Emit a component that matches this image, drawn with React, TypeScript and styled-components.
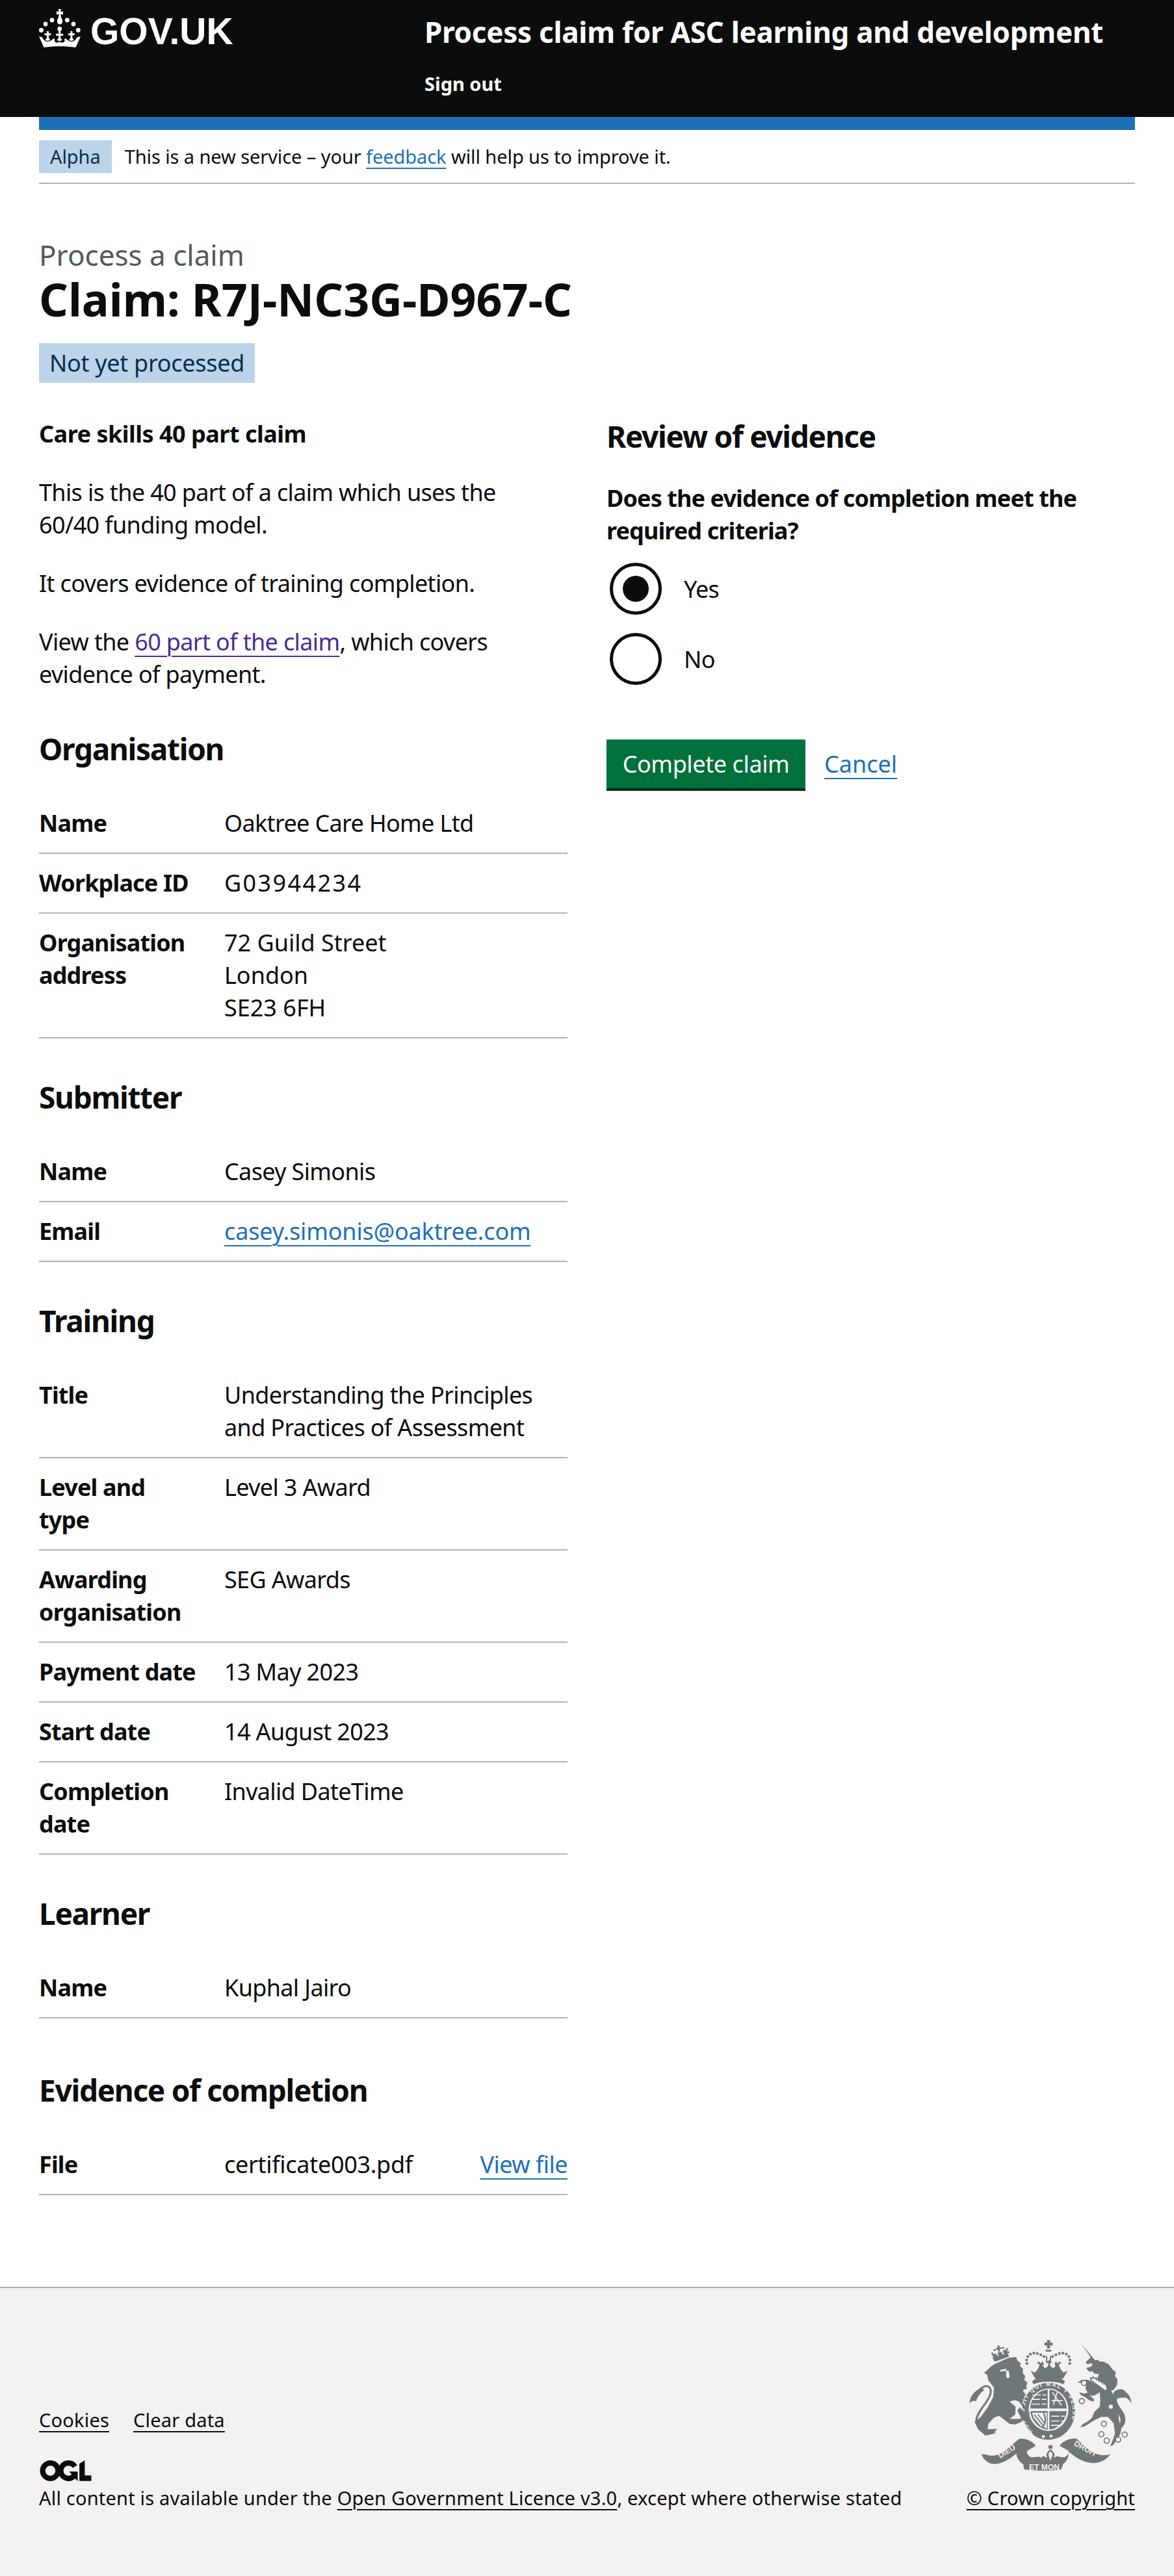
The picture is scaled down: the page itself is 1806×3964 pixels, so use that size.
import type { ReactNode } from "react";
import styled, { createGlobalStyle } from "styled-components";

const FONT = `"Noto Sans", Arial, sans-serif`;
const BLACK = "#0b0c0c";
const RULE = "#b1b4b6";
const ARMS = "#6f777b";
const FOOTER_BG = "#f3f2f1";

const GlobalStyle = createGlobalStyle`
  html, body { margin: 0; padding: 0; background: #fff; }
  body { font-family: ${FONT}; color: ${BLACK}; }
  * { box-sizing: border-box; }
`;

const Header = styled.header`
  background: ${BLACK};
  height: 180px;
  padding: 14px 60px 0;
  display: flex;
`;
const Logo = styled.div`
  width: 593px;
  display: flex;
  align-items: flex-start;
  gap: 15px;
  color: #fff;
  font: 700 57px/59px "Liberation Sans", Arial, sans-serif;
`;
const LogoText = styled.span`
  padding-top: 5px;
`;
const HeaderText = styled.div`
  padding-top: 10px;
`;
const ServiceName = styled.div`
  color: #fff;
  font-size: 44px;
  font-weight: 700;
  line-height: 50px;
  letter-spacing: -0.28px;
`;
const SignOut = styled.div`
  color: #fff;
  font-size: 29px;
  font-weight: 700;
  line-height: 34px;
  margin-top: 38px;
`;

const Width = styled.div`
  margin: 0 60px;
`;
const BlueBar = styled.div`
  height: 20px;
  background: #1d70b8;
`;
const Phase = styled.div`
  display: flex;
  align-items: flex-start;
  gap: 20px;
  height: 83px;
  padding-top: 16px;
  border-bottom: 2px solid ${RULE};
  font-size: 29px;
  line-height: 50px;
  letter-spacing: -0.08px;
`;
const Tag = styled.span`
  background: #bbd4ea;
  color: #0c2d4a;
  padding: 0 17px;
  height: 50px;
  line-height: 50px;
  font-size: 29px;
`;
const A = styled.a<{ $color?: string; $spacing?: number }>`
  color: ${(p) => p.$color || "#1d70b8"};
  text-decoration: underline;
  text-decoration-thickness: 2px;
  text-underline-offset: 0.22em;
  ${(p) => (p.$spacing !== undefined ? `letter-spacing: ${p.$spacing}px;` : "")}
`;

const Main = styled.main`
  padding: 84px 0 141px;
`;
const Caption = styled.div`
  color: #505a5f;
  font-size: 44px;
  line-height: 50px;
`;
const Title = styled.h1`
  margin: 0 0 25px;
  font-size: 70px;
  line-height: 86px;
  font-weight: 700;
`;
const StatusTag = styled.div`
  background: #bbd4ea;
  color: #0c2d4a;
  width: 332px;
  height: 61px;
  padding: 0 16px;
  font-size: 36px;
  line-height: 61px;
  letter-spacing: -0.3px;
  white-space: nowrap;
`;
const Columns = styled.div`
  display: grid;
  grid-template-columns: 813px 813px;
  gap: 60px;
  margin-top: 52px;
`;
const Column = styled.div``;
const Intro = styled.div`
  padding: 2px 0 19px;
`;
const P = styled.p<{ $bold?: boolean }>`
  margin: 0 0 40px;
  font-size: 36px;
  line-height: 50px;
  font-weight: ${(p) => (p.$bold ? 700 : 400)};
  letter-spacing: ${(p) => (p.$bold ? "-0.5px" : "-0.65px")};
`;
const H2 = styled.h2`
  margin: 0 0 40px;
  font-size: 46px;
  line-height: 60px;
  font-weight: 700;
  letter-spacing: -1.3px;
`;
const Section = styled.section<{ $after?: number }>`
  margin-bottom: ${(p) => p.$after ?? 60}px;
`;
const Row = styled.div`
  display: flex;
  align-items: flex-start;
  border-bottom: 2px solid ${RULE};
  padding: 20px 0;
  font-size: 36px;
  line-height: 50px;
  letter-spacing: -0.65px;
`;
const Key = styled.div`
  font-weight: 700;
  width: 285px;
  flex: none;
  padding-right: 40px;
  letter-spacing: -0.85px;
`;
const Value = styled.div<{ $spacing?: number }>`
  flex: 1;
  ${(p) => (p.$spacing !== undefined ? `letter-spacing: ${p.$spacing}px;` : "")}
`;
const Legend = styled.div`
  font-size: 36px;
  line-height: 50px;
  font-weight: 700;
  letter-spacing: -0.9px;
  margin: 41px 0 10px;
`;
const Radio = styled.div`
  display: flex;
  align-items: center;
  gap: 34px;
  font-size: 36px;
  height: 108px;
  margin-left: 5px;
  letter-spacing: -0.65px;
`;
const Circle = styled.span<{ $on?: boolean }>`
  width: 80px;
  height: 80px;
  border: 5px solid ${BLACK};
  border-radius: 50%;
  display: grid;
  place-items: center;
  &::after {
    content: "";
    width: 40px;
    height: 40px;
    border-radius: 50%;
    background: ${(p) => (p.$on ? BLACK : "transparent")};
  }
`;
const Actions = styled.div`
  display: flex;
  align-items: flex-start;
  gap: 29px;
  margin-top: 70px;
  font-size: 36px;
  line-height: 75px;
`;
const Button = styled.button`
  background: #00703c;
  color: #fff;
  border: 0;
  box-shadow: 0 4px 0 #002d18;
  font: 400 36px/50px ${FONT};
  letter-spacing: -0.4px;
  padding: 0;
  width: 306px;
  height: 75px;
`;

const Footer = styled.footer`
  background: ${FOOTER_BG};
  border-top: 2px solid ${RULE};
  height: 446px;
  padding: 0 60px 101px;
  display: flex;
  justify-content: space-between;
  align-items: flex-end;
  font-size: 29px;
  line-height: 40px;
  letter-spacing: 0.2px;
`;
const FooterLinks = styled.div`
  display: flex;
  gap: 37px;
  margin-bottom: 42px;
`;
const Ogl = styled.svg`
  display: block;
  width: 82px;
  height: 32px;
  margin-bottom: 6px;
`;
const FooterRight = styled.div`
  display: flex;
  flex-direction: column;
  align-items: center;
  gap: 20px;
`;
const Arms = styled.svg`
  display: block;
  width: 250px;
  height: 203px;
`;

function Crown() {
  return (
    <svg width="64" height="59" viewBox="0 0 64 59" fill="#fff" aria-hidden="true">
      <path d="M29.6 0h4.2l-.5 4 3.7-.6v5l-3.7-.6.7 4.6c2 3.2 2.4 6 1.9 8-.5 2-1.9 3-3.9 3s-3.4-1-3.9-3c-.5-2 0-4.8 1.9-8l.7-4.6-3.7.6v-5l3.7.6z" />
      <circle cx="10" cy="23" r="3.4" />
      <circle cx="20" cy="17" r="3.4" />
      <circle cx="3.4" cy="32.5" r="3.4" />
      <circle cx="43.4" cy="17" r="3.4" />
      <circle cx="53" cy="23" r="3.4" />
      <circle cx="60.3" cy="32.5" r="3.4" />
      <circle cx="31.7" cy="30.5" r="3.4" />
      <path d="M0 42l5 1.5c2 3.5 4 6 7.5 6.500 3 .3 6.500-1.500 10-5l2 1.500c-1 1.800-1 3.500 1 4.500 2.500 1 4.700.5 6.200-1 1.500 1.500 3.700 2 6.200 1 2-1 2-2.700 1-4.500l2-1.500c3.500 3.500 7 5.300 10 5 3.500-.5 5.500-3 7.500-6.500L64 42l-7.500 17C41 56.500 23 56.500 7.500 59z" />
      <path d="M12 34h3v3.200h3.400v3h-3.400v4l2.400 3.300-3.900 1.500-3.900-1.500 2.400-3.300v-4H8.600v-3H12z" />
      <path d="M30.200 34h3v4h4v3h-4v3.500l2.600 3.300-4.100 1.500-4.100-1.500 2.600-3.300V41h-4v-3h4z" />
      <path d="M48.400 34h3v3.200h3.400v3h-3.400v4l2.400 3.300-3.900 1.500-3.900-1.500 2.400-3.300v-4H45v-3h3.400z" />
    </svg>
  );
}

function CoatOfArms() {
  const dots = [[296, 138], [295, 122], [300, 106], [312, 95], [328, 90], [344, 92], [360, 98], [375, 106], [415, 106], [430, 98], [446, 92], [462, 90], [478, 95], [490, 106], [495, 122], [494, 138]];
  const chain = [[640, 465], [665, 495], [718, 490], [748, 467], [684, 338], [652, 417], [560, 228], [550, 312]];
  return (
    <Arms viewBox="30 30 750 610" aria-hidden="true">
      <defs>
        <path id="garterRing" d="M322 452 A112 120 0 1 1 470 452" />
      </defs>

      {/* lion */}
      <g fill={ARMS}>
        <path d="M132 150l20-12 60-26 34-4 6 16 16 14-4 12 14 12-2 20 12 14-4 18 14 12-6 22 6 6-22 8 46 62 22 34-4 26-24 2-18-12-26-56-32-10-24 6 28 24-2 36-26 20 44 0 34-8-6 14-44 20-28-2-48-38-24 8-26 28-4 26 44-2-12 16 8 4-50 12-34-30-16-34 30-24 30-42 26-48 4-44-26-34-6-26-14-8z" />
        <path d="M172 168l30-6-2 10-26 4zM200 172l12 0 4 28-8 8-8-8z" fill={FOOTER_BG} />
      </g>
      <path d="M62 285C72 250 118 226 128 258c10 44-62 94-66 142-2 22 20 32 46 32" stroke={ARMS} strokeWidth="9" fill="none" />
      <path d="M30 322c4-36 24-60 60-72l8 12c-18 12-30 30-38 52-6-8-18-4-30 8z" fill={ARMS} />
      <g fill={ARMS}>
        <path d="M136 112l70-22 8 16-66 24z" />
        <path d="M134 96l18-4 10 12-20 8zM160 88l18-4 6 14-18 6zM184 78l18-4 6 16-18 6z" />
        <path d="M158 58l10-4 2 10 10-2-2 8-8 2 2 10-8 2-2-10-10 2 0-8 8-2z" />
        <circle cx="136" cy="92" r="5" /><circle cx="146" cy="76" r="5" /><circle cx="186" cy="66" r="5" /><circle cx="204" cy="72" r="5" /><circle cx="210" cy="86" r="5" />
      </g>

      {/* royal crown */}
      <g fill={ARMS}>
        <path d="M389 30h14v11h12v14h-12v13h-14V55h-12V41h12z" />
        <path d="M383 74h26v9h-26zM384 104h6v32h-6zM402 104h6v32h-6z" />
        <path d="M313 172l20 8 14-16 8-20-14-10 12-4 8 8 6-10 8 12-6 8 10 12 14-8 3-14-10-6 12-8 1-8 1 8 12 8-10 6 3 14 14 8 10-12-6-8 8-12 6 10 8-8 12 4-14 10 8 20 14 16 20-8-22 36H335z" />
        <path d="M320 224c6-16 38-24 76-24s70 8 76 24l-8 10c-16-8-38-12-68-12s-52 4-68 12z" />
        {dots.map(([cx, cy]) => (
          <circle key={`${cx}-${cy}`} cx={cx} cy={cy} r="6.5" />
        ))}
      </g>

      {/* garter and shield */}
      <ellipse cx="396" cy="358" rx="124" ry="132" fill={ARMS} stroke={FOOTER_BG} strokeWidth="3" />
      <ellipse cx="396" cy="352" rx="92" ry="98" fill={FOOTER_BG} />
      <g fill={ARMS}>
        <path d="M312 346c0-44 34-84 80-88v88zM400 258c46 4 80 44 80 88h-80z" />
        <path d="M312 358h80v86c-44-6-76-44-80-86zM400 358h80c-4 42-36 80-80 86z" />
      </g>
      <g stroke={FOOTER_BG} strokeWidth="5" fill="none">
        <path d="M322 284h64M318 304h68M318 326h68" strokeDasharray="38 8" />
        <path d="M408 382h64M408 404h60M408 424h44" strokeDasharray="38 8" />
        <path d="M414 272l42 60M436 272l-18 58M410 310h52" />
      </g>
      <path d="M320 366h68v72c-36-6-60-34-68-72z" fill={FOOTER_BG} />
      <path d="M330 374l44 56M346 372l32 42M326 392l32 38" stroke={ARMS} strokeWidth="5" fill="none" />
      <path d="M372 366c14 22 12 50-6 70" stroke={ARMS} strokeWidth="7" fill="none" />
      <path d="M324 468c-4-14 4-24 14-26 36 20 76 20 118-8l26 18-26 22c-40 22-92 24-132-6z" fill={ARMS} />
      <circle cx="372" cy="476" r="7" fill={FOOTER_BG} />
      <circle cx="408" cy="474" r="7" fill={FOOTER_BG} />
      <text fontFamily={`"Liberation Sans", Arial, sans-serif`} fontWeight="700" fontSize="26" fill={FOOTER_BG}>
        <textPath href="#garterRing" textLength="500" lengthAdjust="spacing">HONI SOIT QUI MAL Y PENSE</textPath>
      </text>

      {/* lion's paw and sword in front of the garter */}
      <path d="M246 280l64 90-7 6-62-88z" fill={ARMS} />
      <path d="M262 340l40 44-6 24-22-8-22-44z" fill={ARMS} />

      {/* unicorn */}
      <path fill={ARMS} d="M545 45l66 78 12-2 10 8 16 0 24 12 20 26 14 10-4 20 12 14-2 26-16 24-12 2 16 30 16 50 4 54 12 44-6 24-16 26-16 24-14 6 14-34 8-26-6-46-26-30-32 0-32 16-44 28-20 4 10-14 26-14 18-16 10-26 26-26 2-30-2-36-26 16-22 0 10 6 12 12-2 10-20-6-18-14-22-12-8-12 24 6 16-4-10-18 2-18-16-10-24 0 22-14 26 0 26 14 8 6 18-46-22-2-6-10-18 0-14-16 22-6 10-12-10-4-14 6-10-10 24-24z" />
      <path d="M592 216l-2-12 8 4 4-8 6 8 8-4 2 10 8-4 4 12 8-4 4 10 8-4 2 10 8-2 4 14 6 4-10 16z" fill={FOOTER_BG} stroke={ARMS} strokeWidth="5" />
      <path d="M702 266c26-18 46-6 52 6 12 6 22 24 26 50-10-12-18-24-28-26-14 0-30 0-40 6-4 20 20 44 32 66 12 24 8 50-6 64-12 10-26 10-40 2 14 0 26-8 30-26 4-18-8-34-22-56-14-24-22-64-4-86z" fill={ARMS} />
      {chain.map(([cx, cy]) => (
        <circle key={`${cx}-${cy}`} cx={cx} cy={cy} r="12" fill={FOOTER_BG} stroke={ARMS} strokeWidth="5" />
      ))}

      {/* motto */}
      <g fill={ARMS}>
        <path d="M105 558c26 12 54 6 80-10 32-20 54-46 76-62 26-2 56 6 76 32-12 10-32 16-42 28 2 10 8 20 20 26 12 0 26-4 40-2 10 8 48 6 76 0 14-2 30 2 40 2 12-8 20-20 20-28-14-10-32-18-44-26 20-26 52-36 78-32 22 18 46 46 74 62 26 14 56 18 84 10-22 26-52 44-90 40-36-4-70-24-96-46l-10-6c6 22-8 46-24 58l-8 24c-48 8-116 8-172 0l-4-24c-16-10-30-28-32-50-22 18-42 34-72 44-34 12-70 4-90-40z" />
        <path d="M396 516h18v16h-18z" />
        <path d="M405 534c18 14 24 28 14 38 12 2 18-10 24-4 6 10-8 30-24 24l-6 10-8 10-8-10-6-10c-16 6-30-14-24-24 6-6 12 6 24 4-10-10-4-24 14-38z" />
      </g>
      <path d="M405 544c9 8 12 16 6 26l-6 18-6-18c-6-10-3-18 6-26z" fill={FOOTER_BG} />
      <g fontFamily={`"Liberation Sans", Arial, sans-serif`} fontWeight="700" fontSize="36" fill={FOOTER_BG}>
        <text x="172" y="578" transform="rotate(-32 172 578)">DIEU</text>
        <text x="306" y="630">ET MON</text>
        <text x="512" y="516" transform="rotate(28 512 516)">DROIT</text>
      </g>
    </Arms>
  );
}

type Item = { key: string; value: ReactNode; spacing?: number; action?: ReactNode };

function SummaryList({ items }: { items: Item[] }) {
  return (
    <div>
      {items.map((item) => (
        <Row key={item.key}>
          <Key>{item.key}</Key>
          <Value $spacing={item.spacing}>{item.value}</Value>
          {item.action}
        </Row>
      ))}
    </div>
  );
}

export default function App() {
  return (
    <>
      <GlobalStyle />
      <Header>
        <Logo>
          <Crown />
          <LogoText>GOV.UK</LogoText>
        </Logo>
        <HeaderText>
          <ServiceName>Process claim for ASC learning and development</ServiceName>
          <SignOut>Sign out</SignOut>
        </HeaderText>
      </Header>
      <Width>
        <BlueBar />
        <Phase>
          <Tag>Alpha</Tag>
          <span>This is a new service – your <A>feedback</A> will help us to improve it.</span>
        </Phase>
        <Main>
          <Caption>Process a claim</Caption>
          <Title>Claim: R7J-NC3G-D967-C</Title>
          <StatusTag>Not yet processed</StatusTag>
          <Columns>
            <Column>
              <Intro>
                <P $bold>Care skills 40 part claim</P>
                <P>This is the 40 part of a claim which uses the<br />60/40 funding model.</P>
                <P>It covers evidence of training completion.</P>
                <P>View the <A $color="#4c2c92">60 part of the claim</A>, which covers evidence of payment.</P>
              </Intro>
              <Section>
                <H2>Organisation</H2>
                <SummaryList items={[
                  { key: "Name", value: "Oaktree Care Home Ltd" },
                  { key: "Workplace ID", value: "G03944234", spacing: 2.4 },
                  { key: "Organisation address", value: <>72 Guild Street<br />London<br />SE23 6FH</>, spacing: 0 },
                ]} />
              </Section>
              <Section>
                <H2>Submitter</H2>
                <SummaryList items={[
                  { key: "Name", value: "Casey Simonis" },
                  { key: "Email", value: <A $spacing={-0.15}>casey.simonis@oaktree.com</A> },
                ]} />
              </Section>
              <Section>
                <H2>Training</H2>
                <SummaryList items={[
                  { key: "Title", value: "Understanding the Principles and Practices of Assessment" },
                  { key: "Level and type", value: "Level 3 Award" },
                  { key: "Awarding organisation", value: "SEG Awards" },
                  { key: "Payment date", value: "13 May 2023" },
                  { key: "Start date", value: "14 August 2023" },
                  { key: "Completion date", value: "Invalid DateTime" },
                ]} />
              </Section>
              <Section $after={80}>
                <H2>Learner</H2>
                <SummaryList items={[{ key: "Name", value: "Kuphal Jairo" }]} />
              </Section>
              <Section $after={0}>
                <H2>Evidence of completion</H2>
                <SummaryList items={[{ key: "File", value: "certificate003.pdf", spacing: -0.3, action: <A $spacing={-0.55}>View file</A> }]} />
              </Section>
            </Column>
            <Column>
              <H2>Review of evidence</H2>
              <Legend>Does the evidence of completion meet the required criteria?</Legend>
              <Radio><Circle $on />Yes</Radio>
              <Radio><Circle />No</Radio>
              <Actions><Button>Complete claim</Button><A>Cancel</A></Actions>
            </Column>
          </Columns>
        </Main>
      </Width>
      <Footer>
        <div>
          <FooterLinks>
            <A $color={BLACK}>Cookies</A>
            <A $color={BLACK}>Clear data</A>
          </FooterLinks>
          <Ogl viewBox="0 0 483.2 195.7" aria-hidden="true">
            <path fill={BLACK} d="M421.5 142.8V.1l-50.7 32.3v161.1h112.4v-50.7zm-122.3-9.6A47.12 47.12 0 0 1 221 97.8c0-26 21.1-47.1 47.1-47.1 16.7 0 31.4 8.7 39.7 21.8l42.7-27.2A97.63 97.63 0 0 0 268.1 0c-36.5 0-68.3 20.1-85.1 49.7A98 98 0 0 0 97.8 0C43.9 0 0 43.9 0 97.8s43.9 97.8 97.8 97.8c36.5 0 68.3-20.1 85.1-49.7a97.76 97.76 0 0 0 149.6 25.4l19.4 22.2h3v-87.8h-80l24.3 27.5zM97.8 145c-26 0-47.1-21.1-47.1-47.1s21.1-47.1 47.1-47.1 47.2 21 47.2 47S123.8 145 97.8 145" />
          </Ogl>
          <div>All content is available under the <A $color={BLACK}>Open Government Licence v3.0</A>, except where otherwise stated</div>
        </div>
        <FooterRight>
          <CoatOfArms />
          <A $color={BLACK}>© Crown copyright</A>
        </FooterRight>
      </Footer>
    </>
  );
}
